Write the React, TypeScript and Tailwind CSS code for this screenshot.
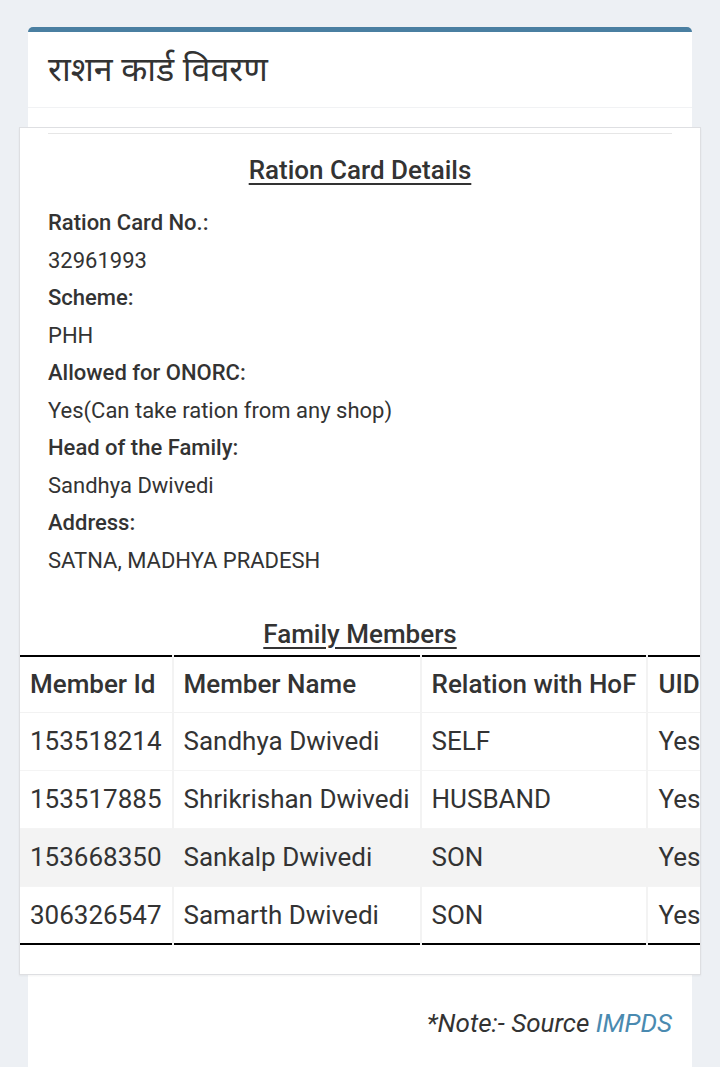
const details = [
  { label: "Ration Card No.:", value: "32961993" },
  { label: "Scheme:", value: "PHH" },
  { label: "Allowed for ONORC:", value: "Yes(Can take ration from any shop)" },
  { label: "Head of the Family:", value: "Sandhya Dwivedi" },
  { label: "Address:", value: "SATNA, MADHYA PRADESH" },
];

const members = [
  { id: "153518214", name: "Sandhya Dwivedi", relation: "SELF", uid: "Yes" },
  { id: "153517885", name: "Shrikrishan Dwivedi", relation: "HUSBAND", uid: "Yes" },
  { id: "153668350", name: "Sankalp Dwivedi", relation: "SON", uid: "Yes" },
  { id: "306326547", name: "Samarth Dwivedi", relation: "SON", uid: "Yes" },
];

export default function App() {
  return (
    <div
      className="min-h-[1067px] bg-[#edf0f4] pt-[27px] px-[28px] text-[#333]"
      style={{ fontFamily: "Roboto, 'Noto Sans', 'Noto Sans Devanagari', sans-serif" }}
    >
      <div className="bg-white rounded-t-[5px] border-t-[5px] border-[#4a7fa1] min-h-[1040px]">
        {/* HEADER */}
        <div className="px-[20px] py-[16px] border-b border-[#f1f2f4]">
          <h1 className="text-[34px] leading-[43px] text-[#333]">राशन कार्ड विवरण</h1>
        </div>

        {/* BODY */}
        <div className="pt-[19px]">
          <div className="-mx-[9px] bg-white border border-[#dedfe2] shadow-[0_1px_2px_rgba(0,0,0,0.05)] pt-[5px] pb-[29px] px-[28px] overflow-hidden">
            <div className="border-t border-[#e6e6e6]" />
            <h2 className="mt-[18px] mb-[16px] text-center text-[26px] leading-[36px] font-medium underline underline-offset-[4px] decoration-[1.5px]">
              Ration Card Details
            </h2>
            <div className="text-[22px] leading-[37.5px]">
              {details.map((d) => (
                <div key={d.label}>
                  <div className="font-medium">{d.label}</div>
                  <div>{d.value}</div>
                </div>
              ))}
            </div>

            {/* FAMILY MEMBERS */}
            <h2 className="mt-[37px] text-center text-[26px] leading-[36px] font-medium underline underline-offset-[4px] decoration-[1.5px]">
              Family Members
            </h2>
            <div className="-mx-[28px] mt-[3px] overflow-hidden">
              <table className="border-separate border-spacing-x-[2px] border-spacing-y-0 -ml-[2px] whitespace-nowrap text-[26px] bg-[#f3f3f3]">
                <thead>
                  <tr className="text-left">
                    <th className="w-[151px] h-[58px] px-[10px] font-medium bg-white border-t-2 border-black border-b border-b-[#f2f2f2]">Member Id</th>
                    <th className="w-[246px] h-[58px] px-[10px] font-medium bg-white border-t-2 border-black border-b border-b-[#f2f2f2]">Member Name</th>
                    <th className="w-[225px] h-[58px] px-[10px] font-medium bg-white border-t-2 border-black border-b border-b-[#f2f2f2]">Relation with HoF</th>
                    <th className="w-[100px] h-[58px] px-[10px] font-medium bg-white border-t-2 border-black border-b border-b-[#f2f2f2]">UID</th>
                  </tr>
                </thead>
                <tbody>
                  {members.map((m, i) => {
                    const bg = i === 2 ? "bg-[#f3f3f3]" : "bg-white";
                    const last = i === members.length - 1;
                    const cell = `h-[58px] px-[10px] ${bg} ${last ? "border-b-2 border-black" : "border-b border-[#f4f4f4]"}`;
                    return (
                      <tr key={m.id}>
                        <td className={cell}>{m.id}</td>
                        <td className={cell}>{m.name}</td>
                        <td className={cell}>{m.relation}</td>
                        <td className={cell}>{m.uid}</td>
                      </tr>
                    );
                  })}
                </tbody>
              </table>
            </div>
          </div>

          {/* NOTE */}
          <p className="mt-[30px] px-[20px] text-right italic text-[26px] leading-[36px]">
            *Note:- Source <span className="text-[#4a8ab0]">IMPDS</span>
          </p>
        </div>
      </div>
    </div>
  );
}
